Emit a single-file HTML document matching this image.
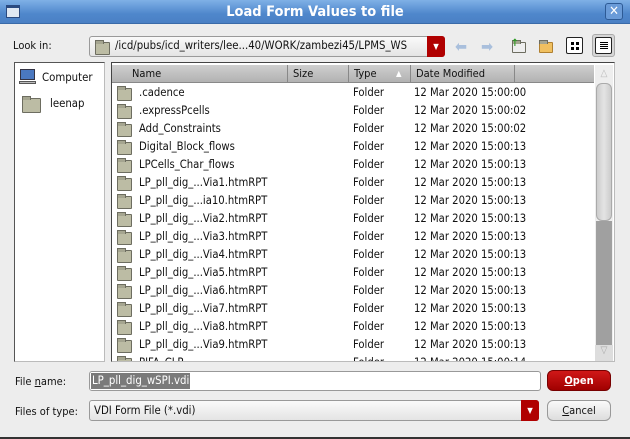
<!DOCTYPE html>
<html><head><style>
*{box-sizing:border-box;margin:0;padding:0}
body{width:630px;height:439px;overflow:hidden;background:#ededed;font-family:"DejaVu Sans Condensed","DejaVu Sans","Liberation Sans",sans-serif;font-stretch:condensed;font-size:11px;color:#111;position:relative}
.abs{position:absolute}
#title{left:0;top:0;width:630px;height:24px;background:linear-gradient(#7fb0e6,#4f87cc 60%,#4a80c4);border-bottom:1px solid #3a6aa8}
#title .t{width:100%;text-align:center;color:#fff;font-weight:bold;font-size:14.5px;line-height:24px}
.fold{position:absolute;width:15px;height:13px;background:#bcbca4;border:1px solid #6d6d60;border-radius:1px}
.fold:before{content:"";position:absolute;left:-1px;top:-3px;width:7px;height:3px;background:#a5a590;border:1px solid #6d6d60;border-bottom:none}
.row{position:absolute;left:0;height:18px;width:480px;line-height:18px}
.row span{position:absolute}
.hd{position:absolute;top:0;height:18px;line-height:18px;border-right:1px solid #888;padding-left:5px}
</style></head><body>
<div id="title" class="abs"><div class="t">Load Form Values to file</div>
<div class="abs" style="left:6px;top:5px;width:14px;height:13px;border:1px solid #2a4a80;background:#dfe8f3;border-top:3px solid #2a4a80"></div>
<div class="abs" style="left:605px;top:3px;width:18px;height:17px;border:1px solid #2d5a95;border-radius:3px;background:#6a9bd8;color:#fff;font-size:13px;line-height:15px;text-align:center;font-weight:bold">✕</div>
</div>
<div class="abs" style="left:13px;top:39px;font-size:11px">Look in:</div>
<div class="abs" style="left:89px;top:36px;width:356px;height:21px;border:1px solid #9a9a9a;border-radius:3px;background:linear-gradient(#fafafa,#e4e4e4)"></div>
<div class="fold" style="left:95px;top:42px"></div>
<div class="abs" style="left:115px;top:39px;font-size:11.3px;white-space:nowrap;width:310px;overflow:hidden">/icd/pubs/icd_writers/lee...40/WORK/zambezi45/LPMS_WS</div>
<div class="abs" style="left:427px;top:36px;width:18px;height:21px;background:#b00000;border-radius:0 3px 3px 0;color:#fff;font-size:8px;text-align:center;line-height:21px">▼</div>
<div class="abs" style="left:455px;top:37px;color:#a9bfdc;font-size:16px">⬅</div>
<div class="abs" style="left:481px;top:37px;color:#a9bfdc;font-size:16px">➡</div>
<div class="fold" style="left:512px;top:42px;background:#eee;width:14px;height:11px"></div>
<div class="abs" style="left:511px;top:38px;color:#2a9a20;font-size:10px;font-weight:bold">↑</div>
<div class="fold" style="left:539px;top:42px;background:#f0c060;border-color:#b08030;width:14px;height:11px"></div>
<div class="abs" style="left:566px;top:37px;width:17px;height:17px;border:1px solid #222;border-radius:2px;background:#fff"><div class="abs" style="left:4px;top:4px;width:3px;height:3px;background:#000;box-shadow:5px 0 #000,0 5px #000,5px 5px #000"></div></div>
<div class="abs" style="left:592px;top:34px;width:23px;height:23px;border:1px solid #aaa;border-radius:3px;background:#d6d6d6"></div>
<div class="abs" style="left:595px;top:37px;width:17px;height:17px;border:1px solid #222;border-radius:2px;background:#fff"><div class="abs" style="left:4px;top:4px;width:8px;height:1px;background:#000;box-shadow:0 2px #000,0 4px #000,0 6px #000"></div></div>

<div class="abs" style="left:14px;top:62px;width:91px;height:300px;background:#fff;border:1px solid #555;border-right-color:#bbb;border-bottom-color:#bbb"></div>
<div class="abs" style="left:20px;top:69px;width:15px;height:11px;background:#4a78c0;border:1px solid #334"></div>
<div class="abs" style="left:19px;top:81px;width:17px;height:3px;background:#bbb;border:1px solid #555"></div>
<div class="abs" style="left:42px;top:71px;font-size:11.3px">Computer</div>
<div class="fold" style="left:22px;top:98px;width:19px;height:15px"></div>
<div class="abs" style="left:50px;top:97px;font-size:11.3px">leenap</div>

<div class="abs" style="left:111px;top:62px;width:504px;height:300px;background:#fff;border:1px solid #444;border-right-color:#bbb;border-bottom-color:#bbb;overflow:hidden">
<div class="abs" style="left:0;top:2px;width:482px;height:18px;background:linear-gradient(#cfcfcf,#b2b2b2);border-bottom:1px solid #888">
<div class="hd" style="left:0;width:176px;padding-left:20px">Name</div>
<div class="hd" style="left:176px;width:61px">Size</div>
<div class="hd" style="left:237px;width:62px">Type<span style="position:absolute;left:47px;font-size:8px;color:#fff">▲</span></div>
<div class="hd" style="left:299px;width:104px;border-right:1px solid #888">Date Modified</div>
</div>
<div class="abs" style="left:483px;top:2px;width:18px;height:296px;background:#eee">
<div class="abs" style="left:0;top:0;width:18px;height:18px;color:#bbb;text-align:center;font-size:10px;line-height:18px">△</div>
<div class="abs" style="left:1px;top:18px;width:16px;height:138px;background:linear-gradient(90deg,#ccc,#e4e4e4,#ccc);border:1px solid #aaa;border-radius:6px"></div>
<div class="abs" style="left:1px;top:156px;width:16px;height:124px;background:#a0a0a0"></div>
<div class="abs" style="left:0;top:280px;width:18px;height:16px;background:#ddd;color:#aaa;text-align:center;font-size:10px">▽</div>
</div>
<div class="abs" style="left:0;top:21px;width:482px;height:280px;font-size:11.2px">
<div class="row" style="top:0"><div class="fold" style="left:5px;top:4px"></div><span style="left:27px">.cadence</span><span style="left:241px">Folder</span><span style="left:302px">12 Mar 2020 15:00:00</span></div>
<div class="row" style="top:18px"><div class="fold" style="left:5px;top:4px"></div><span style="left:27px">.expressPcells</span><span style="left:241px">Folder</span><span style="left:302px">12 Mar 2020 15:00:02</span></div>
<div class="row" style="top:36px"><div class="fold" style="left:5px;top:4px"></div><span style="left:27px">Add_Constraints</span><span style="left:241px">Folder</span><span style="left:302px">12 Mar 2020 15:00:02</span></div>
<div class="row" style="top:54px"><div class="fold" style="left:5px;top:4px"></div><span style="left:27px">Digital_Block_flows</span><span style="left:241px">Folder</span><span style="left:302px">12 Mar 2020 15:00:13</span></div>
<div class="row" style="top:72px"><div class="fold" style="left:5px;top:4px"></div><span style="left:27px">LPCells_Char_flows</span><span style="left:241px">Folder</span><span style="left:302px">12 Mar 2020 15:00:13</span></div>
<div class="row" style="top:90px"><div class="fold" style="left:5px;top:4px"></div><span style="left:27px">LP_pll_dig_...Via1.htmRPT</span><span style="left:241px">Folder</span><span style="left:302px">12 Mar 2020 15:00:13</span></div>
<div class="row" style="top:108px"><div class="fold" style="left:5px;top:4px"></div><span style="left:27px">LP_pll_dig_...ia10.htmRPT</span><span style="left:241px">Folder</span><span style="left:302px">12 Mar 2020 15:00:13</span></div>
<div class="row" style="top:126px"><div class="fold" style="left:5px;top:4px"></div><span style="left:27px">LP_pll_dig_...Via2.htmRPT</span><span style="left:241px">Folder</span><span style="left:302px">12 Mar 2020 15:00:13</span></div>
<div class="row" style="top:144px"><div class="fold" style="left:5px;top:4px"></div><span style="left:27px">LP_pll_dig_...Via3.htmRPT</span><span style="left:241px">Folder</span><span style="left:302px">12 Mar 2020 15:00:13</span></div>
<div class="row" style="top:162px"><div class="fold" style="left:5px;top:4px"></div><span style="left:27px">LP_pll_dig_...Via4.htmRPT</span><span style="left:241px">Folder</span><span style="left:302px">12 Mar 2020 15:00:13</span></div>
<div class="row" style="top:180px"><div class="fold" style="left:5px;top:4px"></div><span style="left:27px">LP_pll_dig_...Via5.htmRPT</span><span style="left:241px">Folder</span><span style="left:302px">12 Mar 2020 15:00:13</span></div>
<div class="row" style="top:198px"><div class="fold" style="left:5px;top:4px"></div><span style="left:27px">LP_pll_dig_...Via6.htmRPT</span><span style="left:241px">Folder</span><span style="left:302px">12 Mar 2020 15:00:13</span></div>
<div class="row" style="top:216px"><div class="fold" style="left:5px;top:4px"></div><span style="left:27px">LP_pll_dig_...Via7.htmRPT</span><span style="left:241px">Folder</span><span style="left:302px">12 Mar 2020 15:00:13</span></div>
<div class="row" style="top:234px"><div class="fold" style="left:5px;top:4px"></div><span style="left:27px">LP_pll_dig_...Via8.htmRPT</span><span style="left:241px">Folder</span><span style="left:302px">12 Mar 2020 15:00:13</span></div>
<div class="row" style="top:252px"><div class="fold" style="left:5px;top:4px"></div><span style="left:27px">LP_pll_dig_...Via9.htmRPT</span><span style="left:241px">Folder</span><span style="left:302px">12 Mar 2020 15:00:13</span></div>
<div class="row" style="top:270px"><div class="fold" style="left:5px;top:4px"></div><span style="left:27px">PIFA_CLP</span><span style="left:241px">Folder</span><span style="left:302px">12 Mar 2020 15:00:14</span></div>
</div>
</div>

<div class="abs" style="left:15px;top:375px">File <u>n</u>ame:</div>
<div class="abs" style="left:89px;top:371px;width:452px;height:20px;border:1px solid #999;border-radius:3px;background:#fff"></div>
<div class="abs" style="left:91px;top:373px;height:16px;line-height:16px;padding:0 1px;background:#7a7a7a;color:#fff;font-size:11.3px">LP_pll_dig_wSPI.vdi</div>
<div class="abs" style="left:547px;top:370px;width:64px;height:21px;border-radius:6px;background:linear-gradient(#d01818,#a00000);border:1px solid #700;color:#fff;font-weight:bold;text-align:center;line-height:19px"><u>O</u>pen</div>
<div class="abs" style="left:15px;top:405px">Files of type:</div>
<div class="abs" style="left:89px;top:400px;width:450px;height:21px;border:1px solid #999;border-radius:3px;background:linear-gradient(#fafafa,#e4e4e4);padding-left:4px;line-height:19px;font-size:11.3px">VDI Form File (*.vdi)</div>
<div class="abs" style="left:521px;top:400px;width:18px;height:21px;background:#b00000;border-radius:0 3px 3px 0;color:#fff;font-size:8px;text-align:center;line-height:21px">▼</div>
<div class="abs" style="left:547px;top:400px;width:64px;height:21px;border-radius:6px;background:linear-gradient(#fafafa,#ddd);border:1px solid #999;text-align:center;line-height:19px"><u>C</u>ancel</div>
<div class="abs" style="left:0;top:437px;width:630px;height:2px;background:#333"></div>
</body></html>
